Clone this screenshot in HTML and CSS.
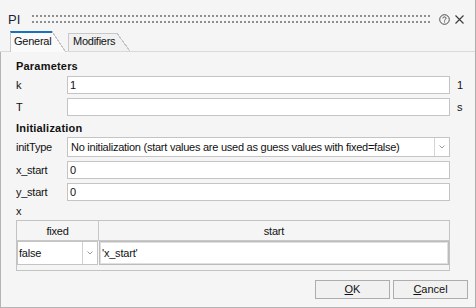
FILE: index.html
```html
<!DOCTYPE html>
<html>
<head>
<meta charset="utf-8">
<link rel="stylesheet" href="styles.css">
</head>
<body>
<div class="window">
  <div class="titlebar">
    <span class="title">PI</span>
    <div class="grip"></div>
    <svg class="help" width="11" height="11" viewBox="0 0 11 11"><circle cx="5.5" cy="5.5" r="4.8" fill="none" stroke="#4a4a4a" stroke-width="1"/><path d="M3.9 4.4 C3.9 3.4 4.6 2.9 5.5 2.9 C6.4 2.9 7.1 3.5 7.1 4.3 C7.1 5.3 5.6 5.3 5.6 6.6" fill="none" stroke="#4a4a4a" stroke-width="1"/><rect x="5.1" y="7.4" width="1" height="1.1" fill="#4a4a4a"/></svg>
    <svg class="close" width="9" height="9" viewBox="0 0 9 9"><path d="M0.5 0.5 L8.5 8.5 M8.5 0.5 L0.5 8.5" stroke="#3a3a3a" stroke-width="1.1"/></svg>
  </div>
  <div class="tabbar">
    <div class="tab tab-active"><span class="tab-label">General</span><span class="tab-slant"></span></div>
    <div class="tab tab-inactive"><span class="tab-label">Modifiers</span><span class="tab-slant"></span></div>
  </div>
  <div class="pane">
    <div class="section">Parameters</div>
    <div class="row row-first"><span class="label">k</span><div class="field">1</div><span class="unit">1</span></div>
    <div class="row"><span class="label">T</span><div class="field"></div><span class="unit">s</span></div>
    <div class="section section-second">Initialization</div>
    <div class="row row-combo"><span class="label">initType</span><div class="combo"><span class="combo-text">No initialization (start values are used as guess values with fixed=false)</span><span class="combo-btn"><svg width="6" height="4" viewBox="0 0 6 4"><path d="M0.5 0.5 L3 3 L5.5 0.5" fill="none" stroke="#9a9a9a" stroke-width="1"/></svg></span></div><span class="unit"></span></div>
    <div class="row"><span class="label">x_start</span><div class="field">0</div><span class="unit"></span></div>
    <div class="row"><span class="label">y_start</span><div class="field">0</div><span class="unit"></span></div>
    <div class="plain">x</div>
    <div class="table">
      <div class="thead">
        <div class="th th-fixed">fixed</div>
        <div class="th th-start">start</div>
      </div>
      <div class="trow">
        <div class="cell-combo"><span class="cell-combo-text">false</span><span class="cell-combo-btn"><svg width="6" height="4" viewBox="0 0 6 4"><path d="M0.5 0.5 L3 3 L5.5 0.5" fill="none" stroke="#9a9a9a" stroke-width="1"/></svg></span></div>
        <div class="cell-start">'x_start'</div>
      </div>
    </div>
    <div class="buttons">
      <div class="btn"><u>O</u>K</div>
      <div class="btn"><u>C</u>ancel</div>
    </div>
  </div>
</div>
</body>
</html>
```

FILE: styles.css
```css
* { box-sizing: border-box; }
html, body { margin: 0; padding: 0; }
body {
  background: #f5f5f5;
  font-family: "Liberation Sans", Arial, sans-serif;
  font-size: 11px;
  color: #111;
}
.window {
  width: 476px;
  height: 308px;
  background: #f5f5f5;
  border-right: 1px solid #adadad;
  display: flex;
  flex-direction: column;
}
.titlebar {
  height: 31px;
  padding: 7px 11px 0 8px;
  display: flex;
  align-items: center;
}
.title {
  font-size: 13px;
  color: #1e1e38;
  line-height: 14px;
  padding-top: 1px;
}
.grip {
  flex: 1;
  height: 8px;
  margin: 0 8px 0 12px;
  background-image:
    linear-gradient(to bottom, transparent 2px, #f5f5f5 2px),
    linear-gradient(to right, #8f8f8f 2px, transparent 2px);
  background-size: 4px 6px;
}
.help { display: block; margin-right: 5px; }
.close { display: block; }

.tabbar {
  height: 21px;
  padding-left: 10px;
  display: flex;
  align-items: flex-end;
  border-bottom: 1px solid #d9d9d9;
}
.tab { display: flex; align-items: stretch; }
.tab-label {
  letter-spacing: -0.25px;
  line-height: 13px;
  white-space: nowrap;
}
.tab-active { height: 21px; margin-bottom: -1px; }
.tab-active .tab-label {
  width: 42px;
  background: #fafafa;
  border-left: 1px solid #c8c8c8;
  border-top: 2px solid #1a73b8;
  padding: 2px 0 0 3px;
}
.tab-active .tab-slant {
  width: 14px;
  background: linear-gradient(to top right, #fafafa calc(50% - 0.7px), #c4c4c4 calc(50% - 0.7px), #c4c4c4 calc(50% + 0.4px), transparent calc(50% + 0.4px));
}
.tab-inactive { height: 18px; margin-left: 2px; }
.tab-inactive .tab-label {
  width: 49px;
  background: #f1f1f1;
  border-left: 1px solid #c8c8c8;
  border-top: 1px solid #c8c8c8;
  padding: 1px 0 0 4px;
}
.tab-inactive .tab-slant {
  width: 13px;
  background: linear-gradient(to top right, #f1f1f1 calc(50% - 0.7px), #c4c4c4 calc(50% - 0.7px), #c4c4c4 calc(50% + 0.4px), transparent calc(50% + 0.4px));
}

.pane {
  flex: 1;
  border-left: 1px solid #b4b4b4;
  border-bottom: 1px solid #b4b4b4;
  padding: 7px 0 8px 15px;
  display: flex;
  flex-direction: column;
}
.section {
  font-weight: bold;
  line-height: 14px;
  height: 14px;
  letter-spacing: 0.2px;
  color: #111;
}
.section-second { margin-top: 5px; }
.row {
  display: flex;
  align-items: center;
  height: 18px;
  margin-top: 4px;
}
.row-first { margin-top: 3px; }
.row-combo { height: 20px; margin-top: 2px; }
.label {
  width: 51px;
  letter-spacing: -0.25px;
  white-space: nowrap;
}
.unit {
  width: 25px;
  padding-left: 7px;
}
.field {
  flex: 1;
  height: 18px;
  background: #fff;
  border: 1px solid #c4c4c4;
  padding-left: 2px;
  line-height: 16px;
}
.combo {
  flex: 1;
  height: 20px;
  background: #fff;
  border: 1px solid #c4c4c4;
  display: flex;
}
.combo-text {
  flex: 1;
  padding-left: 3px;
  line-height: 18px;
  letter-spacing: -0.25px;
  white-space: nowrap;
  overflow: hidden;
}
.combo-btn {
  width: 15px;
  border-left: 1px solid #d4d4d4;
  display: flex;
  align-items: center;
  justify-content: center;
}
.combo-btn svg { display: block; }
.plain {
  margin-top: 3px;
  line-height: 14px;
  height: 14px;
}
.table {
  margin-top: 2px;
  margin-right: 25px;
  height: 51px;
  border: 1px solid #c3c3c3;
}
.thead {
  display: flex;
  height: 20px;
  border-bottom: 1px solid #c8c8c8;
}
.th {
  text-align: center;
  line-height: 19px;
  padding-top: 1px;
  letter-spacing: -0.2px;
}
.th-fixed { width: 82px; border-right: 1px solid #c8c8c8; }
.th-start { flex: 1; }
.trow {
  display: flex;
  height: 24px;
}
.cell-combo {
  width: 81px;
  background: #fff;
  border: 1px solid #c4c4c4;
  display: flex;
}
.cell-combo-text {
  flex: 1;
  padding-left: 1px;
  line-height: 22px;
  letter-spacing: -0.2px;
}
.cell-combo-btn {
  width: 15px;
  border-left: 1px solid #d0d0d0;
  display: flex;
  align-items: center;
  justify-content: center;
}
.cell-combo-btn svg { display: block; }
.cell-start {
  flex: 1;
  margin-left: 1px;
  background: #fff;
  border: 1px solid #bcbcbc;
  box-shadow: inset 0 0 0 1px #e0e0e0;
  padding-left: 2px;
  line-height: 22px;
  letter-spacing: -0.2px;
}
.buttons {
  margin-top: auto;
  display: flex;
  justify-content: flex-end;
  gap: 3px;
  padding-right: 7px;
}
.btn {
  width: 75px;
  height: 19px;
  border: 1px solid #adadad;
  background: #f1f1f1;
  text-align: center;
  line-height: 17px;
}
.btn u { text-decoration-thickness: 1px; text-underline-offset: 1px; }
```
